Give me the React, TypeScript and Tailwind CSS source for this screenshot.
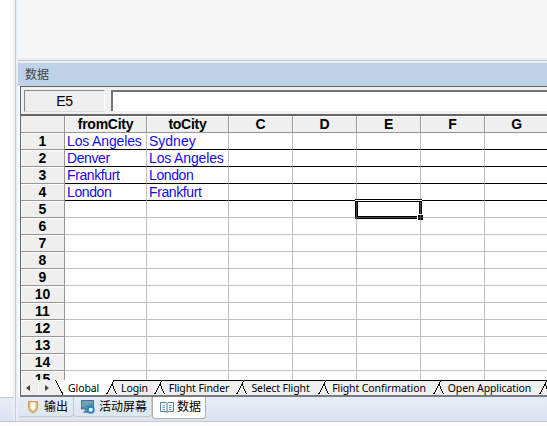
import React from "react";

const columns = [
  { name: "fromCity", width: "w-[82px]" },
  { name: "toCity", width: "w-[82px]" },
  { name: "C", width: "w-[64px]" },
  { name: "D", width: "w-[64px]" },
  { name: "E", width: "w-[64px]" },
  { name: "F", width: "w-[64px]" },
  { name: "G", width: "w-[64px]" },
];

const data = [
  ["Los Angeles", "Sydney"],
  ["Denver", "Los Angeles"],
  ["Frankfurt", "London"],
  ["London", "Frankfurt"],
];

const tracking: Record<string, string> = {
  "Los Angeles": "tracking-[-0.15px]",
  Sydney: "tracking-[0px]",
  Denver: "tracking-[-0.4px]",
  Frankfurt: "tracking-[-0.4px]",
  London: "tracking-[-0.4px]",
};

const tabs = [
  { name: "Login", width: "w-[37px]", pad: "pr-[2px]" },
  { name: "Flight Finder", width: "w-[71px]", pad: "pr-[3px]" },
  { name: "Select Flight", width: "w-[71px]", pad: "pr-[4px]" },
  { name: "Flight Confirmation", width: "w-[104px]", pad: "pr-[4px]" },
  { name: "Open Application", width: "w-[95px]", pad: "pr-[4px]" },
];

function Divider({ first = false }: { first?: boolean }) {
  return (
    <svg width="11" height="15" viewBox="0 0 11 15" className="shrink-0" shapeRendering="crispEdges">
      {first && <path d="M0 0H8V1L3 10L0 15Z" fill="#fff" />}
      <path d={first ? "M7 .5H11" : "M0 .5H11"} stroke="#000" />
      <path d="M0.5 14.5L8 0.5M6 4L10.5 14.5" stroke="#000" fill="none" />
    </svg>
  );
}

function OutputIcon() {
  return (
    <svg width="12" height="14" viewBox="0 0 12 14">
      <path d="M1.5 1.5H10.5V8.5Q10 11 6 13Q2 11 1.5 8.5Z" fill="#e3ba74" stroke="#c89c54" />
      <path d="M3.5 2.5H8.5V8.5L6 10.5L3.5 8.5Z" fill="#fffdf5" />
    </svg>
  );
}

function ScreenIcon() {
  return (
    <svg width="14" height="14" viewBox="0 0 14 14">
      <rect x="0.5" y="0.5" width="12" height="8.5" fill="#568aa5" stroke="#4b7489" />
      <path d="M1 1H12V3L1 7Z" fill="#6fa2b9" />
      <path d="M5 9V12M2.5 12H7" stroke="#4b7489" strokeWidth="1.5" />
      <circle cx="9.7" cy="9.7" r="3" fill="#fff" stroke="#2483d3" strokeWidth="2" />
    </svg>
  );
}

function BookIcon() {
  return (
    <svg width="14" height="12" viewBox="0 0 14 12" fill="none" stroke="#547f9e">
      <path d="M.5 1.5H5Q6.5 1.5 7 2.5Q7.5 1.5 9 1.5H13.5V10.5H9L7 11L5 10.5H.5Z" fill="#f6fbfe" />
      <path d="M7 2.5V11" />
      <path d="M2.5 4.5H5M2.5 6.5H5M2.5 8.5H5M9 4.5H11.5M9 6.5H11.5M9 8.5H11.5" strokeWidth=".8" />
    </svg>
  );
}

function Selection() {
  return (
    <svg width="69" height="22" viewBox="0 0 69 22" shapeRendering="crispEdges" className="absolute -left-[2px] -top-[2px] z-10">
      <path d="M0 0H67V20H0Z" fill="#000" />
      <path d="M0 1H67V2H0ZM3 3H64V17H3Z" fill="#fff" />
      <path d="M1.5 3V20M65.5 3V20M0 18.5H67" stroke="#444" />
      <path d="M62 15H67V20H62Z" fill="#fff" />
      <path d="M63 16H68V21H63Z" fill="#000" />
      <path d="M65.5 16V21M63 18.5H68" stroke="#444" />
    </svg>
  );
}

export default function App() {
  return (
    <div className="flex h-[426px] w-[547px] flex-col overflow-hidden bg-white font-['Liberation_Sans','Noto_Sans_CJK_SC',sans-serif] text-black">
      <div className="flex h-[421px]">
        <aside className="flex w-[13px] shrink-0 flex-col bg-white">
          <div className="h-[397px]" />
          <div className="h-[24px] border-t border-[#c7c8ca] bg-linear-to-b from-[#e7edf6] to-[#dae4f1]" />
        </aside>
        <div className="w-[5px] shrink-0 border-x-2 border-[#e9eff9] bg-[#c9cdd3]" />
        <main className="flex w-[529px] flex-col overflow-hidden">
          <div className="h-[58px] shrink-0 bg-[#f7f7f7]" />
          <div className="flex h-[5px] shrink-0 flex-col justify-center bg-[#e9eff8]">
            <div className="h-px bg-[#c8cbcc]" />
          </div>
          <header className="h-[23px] shrink-0 bg-[#bfd1e7] pl-[7px] text-[12px] leading-[24px] text-[#444]">数据</header>
          <section className="ml-[2px] flex h-[311px] shrink-0 flex-col overflow-hidden border-l border-t border-[#666] bg-white">
            <div className="flex h-[29px] shrink-0 border-b-2 border-[#666] bg-[#f1f1f1] pt-[3px]">
              <div className="ml-[3px] h-[22px] w-[81px] border border-b-[#ddd] border-l-[#888] border-r-white border-t-[#888] bg-[#efefef] text-center text-[14px] leading-[20px] tracking-[-0.4px]">E5</div>
              <div className="ml-[6px] h-[21px] flex-1 border-l-2 border-t-2 border-[#727272] bg-white" />
            </div>
            <div className="flex h-[17px] w-[530px] shrink-0">
              <div className="w-[44px] border-b border-r border-[#999] bg-[#efefef]" />
              {columns.map((column) => (
                <div key={column.name} className={`${column.width} shrink-0 border-b border-r border-[#969696] bg-[#efefef] text-center text-[14px] font-bold leading-[17px] tracking-[-0.25px] shadow-[inset_1px_1px_white]`}>{column.name}</div>
              ))}
            </div>
            <div className="h-[247px] shrink-0 overflow-hidden">
              {Array.from({ length: 15 }, (_, row) => (
                <div key={row} className="flex h-[17px] w-[530px]">
                  <div className="w-[44px] shrink-0 border-b border-r border-[#969696] bg-[#efefef] text-center text-[14px] font-bold leading-[17px] shadow-[inset_1px_1px_white]">{row + 1}</div>
                  {columns.map((column, col) => (
                    <div key={column.name} className={`${column.width} relative shrink-0 whitespace-nowrap border-b border-r border-r-[#c0c0c0] pl-[2px] text-[14px] leading-[17px] text-[#1808ee] ${tracking[data[row]?.[col] ?? ""] ?? ""} ${row < 4 ? "border-b-black" : "border-b-[#c0c0c0]"}`}>
                      {data[row]?.[col]}
                      {row === 4 && col === 4 && <Selection />}
                    </div>
                  ))}
                </div>
              ))}
            </div>
            <nav className="flex h-[17px] w-[526px] shrink-0 border-b-2 border-[#7b7b7b] bg-[#efefef] font-['Noto_Sans',sans-serif] text-[10.5px] leading-[16px] tracking-[-0.1px]">
              <div className="flex h-[15px] w-[34px] shrink-0 items-center bg-[#efefef]">
                <svg width="34" height="15" viewBox="0 0 34 15" fill="#444">
                  <path d="M9 5V11L5 8ZM24 5V11L28 8Z" />
                  <path d="M17.5 1V15" stroke="#fff" />
                </svg>
              </div>
              <div className="flex h-[15px] w-[51px] shrink-0 bg-white">
                <svg width="9" height="15" viewBox="0 0 9 15" shapeRendering="crispEdges" className="shrink-0"><path d="M0 0L8 15H0Z" fill="#efefef" /><path d="M.5 0L8 14.5" stroke="#000" /></svg>
                <span className="ml-[4px] whitespace-nowrap">Global</span>
              </div>
              <Divider first />
              {tabs.map((tab) => (
                <React.Fragment key={tab.name}>
                  <div className={`${tab.width} ${tab.pad} shrink-0 whitespace-nowrap border-t border-black text-center leading-[14px]`}>{tab.name}</div>
                  <Divider />
                </React.Fragment>
              ))}
            </nav>
          </section>
          <footer className="flex h-[24px] shrink-0 bg-linear-to-b from-[#e6edf6] to-[#dae4f1] text-[12px] leading-[19px]">
            <div className="flex h-[20px] w-[56px] items-center gap-[5px] rounded-b-[3px] border-b border-r border-[#c7c9cd] pl-[9px]"><OutputIcon /><span className="pt-[2px]">输出</span></div>
            <div className="flex h-[20px] w-[78px] items-center gap-[4px] rounded-b-[3px] border-b border-r border-[#c7c9cd] pl-[7px]"><ScreenIcon /><span className="pt-[2px]">活动屏幕</span></div>
            <div className="flex h-[22px] w-[54px] items-center gap-[3px] rounded-b-[3px] border border-t-0 border-[#aeb0b4] bg-white pb-px pl-[7px]"><BookIcon /><span className="pt-px">数据</span></div>
          </footer>
        </main>
      </div>
      <div className="h-px bg-[#c7cacc]" />
      <div className="h-[4px] bg-[#fcfcfc]" />
    </div>
  );
}
